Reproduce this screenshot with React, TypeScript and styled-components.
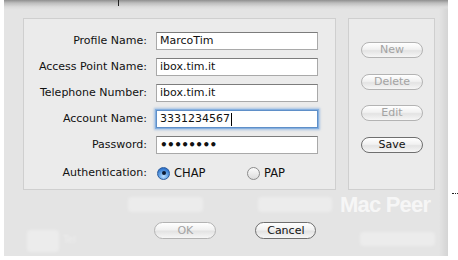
import React from 'react';
import styled, { createGlobalStyle, css } from 'styled-components';

const GlobalStyle = createGlobalStyle`
    html, body {
        margin: 0;
        padding: 0;
        background: #ffffff;
    }
    body {
        font-family: "DejaVu Sans", "Liberation Sans", sans-serif;
        font-size: 11px;
        color: #111111;
    }
`;

const Page = styled.div`
    position: relative;
    width: 458px;
    height: 260px;
    overflow: hidden;
`;

const Sheet = styled.div`
    margin-left: 4px;
    width: 444px;
    height: 256px;
    box-sizing: border-box;
    padding: 18px 0 0 19px;
    display: flex;
    flex-direction: column;
    background:
        linear-gradient(to bottom, #8f8f8f 0, #bdbdbd 3px, #dcdcdc 7px, rgba(228, 228, 228, 0) 10px),
        linear-gradient(to left, rgba(0, 0, 0, 0.07), rgba(0, 0, 0, 0) 9px),
        #e4e4e4;
`;

const MainRow = styled.div`
    display: flex;
    gap: 12px;
    height: 172px;
`;

const Panel = styled.div`
    box-sizing: border-box;
    border: 1px solid #cfcfcf;
    background: #ebebeb;
`;

const FormPanel = styled(Panel)`
    width: 313px;
    padding-top: 13px;
    display: grid;
    grid-template-columns: 123px 162px;
    grid-auto-rows: 18px;
    column-gap: 9px;
    row-gap: 8px;
    align-content: start;
`;

const SidePanel = styled(Panel)`
    width: 87px;
    padding: 23px 0 0 1px;
    display: flex;
    flex-direction: column;
    align-items: center;
    gap: 15.5px;
`;

const Label = styled.div`
    text-align: right;
    line-height: 18px;
    white-space: nowrap;
`;

const Field = styled.div<{ $focused?: boolean; $secret?: boolean }>`
    height: 18px;
    box-sizing: border-box;
    background: #ffffff;
    border: 1px solid #a9a9a9;
    border-top-color: #7c7c7c;
    padding: 0 3px;
    line-height: 16px;
    white-space: nowrap;
    display: flex;
    align-items: center;
    ${p => p.$focused && css`
        border-color: #5f8fc8;
        box-shadow: 0 0 0 1px #86b0e0, 0 0 2px 2px rgba(110, 160, 220, 0.55);
    `}
    ${p => p.$secret && css`
        font-size: 12px;
        font-weight: bold;
        letter-spacing: -0.6px;
    `}
`;

const Caret = styled.span`
    display: inline-block;
    width: 1px;
    height: 13px;
    margin-left: 1px;
    background: #000000;
`;

const AuthLabel = styled(Label)`
    line-height: 22px;
`;

const RadioGroup = styled.div`
    display: flex;
    align-items: center;
    height: 22px;
    margin-left: 1px;
`;

const RadioOption = styled.label<{ $width?: number }>`
    display: flex;
    align-items: center;
    gap: 4px;
    width: ${p => (p.$width ? `${p.$width}px` : 'auto')};
    font-size: 11.5px;
`;

const RadioDot = styled.span<{ $checked?: boolean }>`
    position: relative;
    width: 13px;
    height: 13px;
    box-sizing: border-box;
    border-radius: 50%;
    border: 1px solid ${p => (p.$checked ? '#2c5c9c' : '#8c8c8c')};
    background: ${p => p.$checked
        ? 'radial-gradient(circle at 50% 75%, #bfe0ff 0, #6aa7e6 40%, #2a6fc9 80%)'
        : 'linear-gradient(#fbfbfb, #dcdcdc)'};
    ${p => p.$checked && css`
        &::after {
            content: '';
            position: absolute;
            left: 3.5px;
            top: 3.5px;
            width: 4px;
            height: 4px;
            border-radius: 50%;
            background: #0c1b33;
        }
    `}
`;

const PillButton = styled.button<{ $disabled?: boolean; $width?: number }>`
    width: ${p => p.$width ?? 62}px;
    height: 16px;
    padding: 0;
    border-radius: 9px;
    box-sizing: border-box;
    border: 1px solid ${p => (p.$disabled ? '#b3b3b3' : '#6f6f6f')};
    background: linear-gradient(#ffffff 0, #f1f1f1 45%, #e3e3e3 55%, #f6f6f6 100%);
    color: ${p => (p.$disabled ? '#a3a3a3' : '#111111')};
    font-family: "DejaVu Sans", "Liberation Sans", sans-serif;
    font-size: 11px;
    line-height: 14px;
    cursor: default;
`;

const WatermarkRow = styled.div`
    margin-top: 6px;
    height: 17px;
    display: flex;
    align-items: center;
`;

const Ghost = styled.div<{ $width: number; $height: number; $left?: number; $top?: number }>`
    width: ${p => p.$width}px;
    height: ${p => p.$height}px;
    margin-left: ${p => p.$left ?? 0}px;
    margin-top: ${p => p.$top ?? 0}px;
    flex: none;
    border-radius: 3px;
    background: rgba(255, 255, 255, 0.3);
    filter: blur(1.5px);
`;

const GhostText = styled.span<{ $left?: number; $top?: number }>`
    margin-left: ${p => p.$left ?? 0}px;
    margin-top: ${p => p.$top ?? 0}px;
    color: rgba(255, 255, 255, 0.35);
    font-size: 10px;
    filter: blur(1px);
`;

const Watermark = styled.span`
    margin-left: 8px;
    font-family: "Liberation Sans", Arial, sans-serif;
    font-weight: bold;
    font-size: 22px;
    letter-spacing: -0.8px;
    line-height: 17px;
    color: rgba(255, 255, 255, 0.7);
`;

const Footer = styled.div`
    margin-top: 9px;
    display: flex;
    align-items: flex-start;
`;

const FooterButton = styled(PillButton)<{ $left: number }>`
    height: 17px;
    margin-left: ${p => p.$left}px;
    flex: none;
`;

const Tick = styled.div`
    position: absolute;
    left: 118px;
    top: 0;
    width: 1px;
    height: 6px;
    background: #222222;
`;

const Dots = styled.div`
    position: absolute;
    left: 452px;
    top: 193px;
    width: 6px;
    border-top: 1px dotted #222222;
`;

const fields = [
    { label: 'Profile Name:', value: 'MarcoTim' },
    { label: 'Access Point Name:', value: 'ibox.tim.it' },
    { label: 'Telephone Number:', value: 'ibox.tim.it' },
    { label: 'Account Name:', value: '3331234567', focused: true },
    { label: 'Password:', value: '••••••••', secret: true },
];

const App = () => {
    return (
        <Page>
            <GlobalStyle />
            <Sheet>
                <MainRow>
                    <FormPanel>
                        {fields.map(f => (
                            <React.Fragment key={f.label}>
                                <Label>{f.label}</Label>
                                <Field $focused={f.focused} $secret={f.secret}>
                                    {f.value}
                                    {f.focused && <Caret />}
                                </Field>
                            </React.Fragment>
                        ))}
                        <AuthLabel>Authentication:</AuthLabel>
                        <RadioGroup>
                            <RadioOption $width={90}>
                                <RadioDot $checked />
                                CHAP
                            </RadioOption>
                            <RadioOption>
                                <RadioDot />
                                PAP
                            </RadioOption>
                        </RadioGroup>
                    </FormPanel>
                    <SidePanel>
                        <PillButton $disabled>New</PillButton>
                        <PillButton $disabled>Delete</PillButton>
                        <PillButton $disabled>Edit</PillButton>
                        <PillButton>Save</PillButton>
                    </SidePanel>
                </MainRow>
                <WatermarkRow>
                    <Ghost $width={75} $height={15} $left={105} />
                    <Ghost $width={74} $height={15} $left={55} />
                    <Watermark>Mac Peer</Watermark>
                </WatermarkRow>
                <Footer>
                    <Ghost $width={32} $height={22} $left={4} $top={8} />
                    <GhostText $left={4} $top={12}>Tel</GhostText>
                    <FooterButton $left={78} $disabled>OK</FooterButton>
                    <FooterButton $left={39} $width={61}>Cancel</FooterButton>
                    <Ghost $width={75} $height={14} $left={44} $top={10} />
                </Footer>
            </Sheet>
            <Tick />
            <Dots />
        </Page>
    );
};

export default App;
